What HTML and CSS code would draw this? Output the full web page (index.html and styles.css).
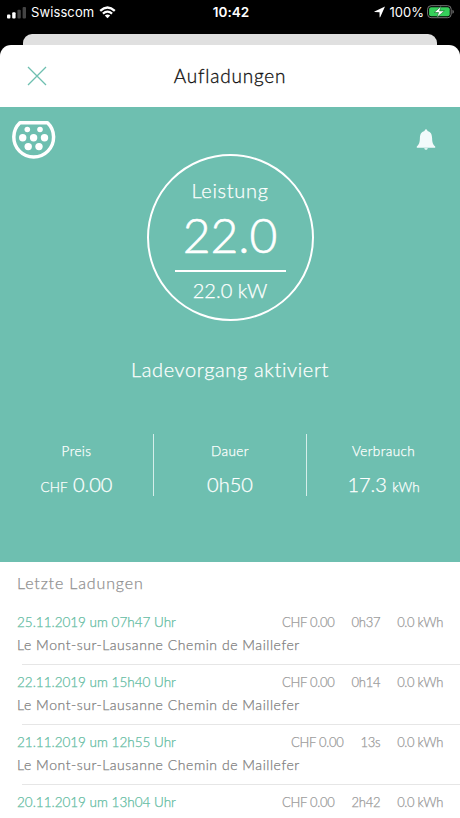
FILE: index.html
```html
<!DOCTYPE html>
<html lang="de">
<head>
    <meta charset="UTF-8">
    <meta name="viewport" content="width=device-width, initial-scale=1.0">
    <title>Aufladungen</title>
    <link rel="stylesheet" href="styles.css">
</head>
<body>
    <!-- Status Bar -->
    <div class="status-bar">
        <div class="status-left">
            <svg class="signal" width="20" height="12" viewBox="0 0 20 12">
                <rect x="0" y="7.5" width="3.4" height="4" rx="1" fill="#fff"/>
                <rect x="5.2" y="5.3" width="3.4" height="6.2" rx="1" fill="#fff"/>
                <rect x="10.4" y="2.8" width="3.4" height="8.7" rx="1" fill="#444"/>
                <rect x="15.6" y="0" width="3.4" height="11.5" rx="1" fill="#444"/>
            </svg>
            <span class="carrier">Swisscom</span>
            <svg class="wifi" width="17" height="13" viewBox="0 0 17 13">
                <path d="M1.2 4.8Q8.5-1.9 15.8 4.8" fill="none" stroke="#fff" stroke-width="2.3"/>
                <path d="M3.9 7.7Q8.5 3.7 13.1 7.7" fill="none" stroke="#fff" stroke-width="2.2"/>
                <path d="M8.5 12.3L5.8 9.6Q8.5 7.6 11.2 9.6Z" fill="#fff"/>
            </svg>
        </div>
        <span class="clock">10:42</span>
        <div class="status-right">
            <svg class="location" width="12" height="12" viewBox="0 0 12 12">
                <path d="M11 0.6L0.5 5.4Q0 6 0.7 6.1L5.5 6.2L5.6 11Q5.8 11.8 6.3 11Z" fill="#fff"/>
            </svg>
            <span class="percent">100%</span>
            <svg class="battery" width="28" height="14" viewBox="0 0 28 14">
                <rect x="0.6" y="0.7" width="23.6" height="12" rx="3.5" fill="none" stroke="#777" stroke-width="1"/>
                <rect x="2.1" y="2.2" width="20.6" height="9" rx="2" fill="#35d05a"/>
                <path d="M25.4 4.7Q27 5.2 27 6.7T25.4 8.8Z" fill="#666"/>
                <path d="M14 1.3L7.2 7.5H11.6L9.8 12.4L17.4 5.9H12.6Z" fill="#fff" stroke="#17642b" stroke-width="0.6"/>
            </svg>
        </div>
    </div>

    <div class="card-behind"></div>

    <div class="sheet">
        <!-- Title -->
        <header class="header">
            <svg class="close" width="20" height="20" viewBox="0 0 20 20">
                <path d="M1 1L19 19M19 1L1 19" stroke="#6ebfb0" stroke-width="1.3"/>
            </svg>
            <h1>Aufladungen</h1>
        </header>

        <!-- Current charging -->
        <section class="charging">
            <div class="icons">
                <svg class="plug" width="44" height="39" viewBox="0 0 44 39">
                    <path d="M7.9 1.8H35.5A19.9 19.9 0 1 1 7.9 1.8Z" fill="none" stroke="#fff" stroke-width="3.5" stroke-linejoin="round"/>
                    <g fill="#fff">
                        <circle cx="15.3" cy="8.5" r="2.8"/>
                        <circle cx="28" cy="8.5" r="2.8"/>
                        <circle cx="10.7" cy="16.7" r="3.7"/>
                        <circle cx="21.6" cy="16.7" r="3.7"/>
                        <circle cx="32.5" cy="16.7" r="3.7"/>
                        <circle cx="16.2" cy="25.6" r="3.7"/>
                        <circle cx="27" cy="25.6" r="3.7"/>
                    </g>
                </svg>
                <svg class="bell" width="20" height="22" viewBox="0 0 20 22">
                    <path d="M10 0.3Q11.4 0.4 11.5 1.9C15 2.8 16 5.5 16.1 9C16.2 13.5 16.9 15.4 19.2 17.6V18.7H0.8V17.6C3.1 15.4 3.8 13.5 3.9 9C4 5.5 5 2.8 8.5 1.9Q8.6 0.4 10 0.3Z" fill="#f2fafb"/>
                    <path d="M8.2 19.1H11.8Q11.4 21 10 21T8.2 19.1Z" fill="#d9f1ee"/>
                </svg>
            </div>

            <div class="power">
                <span class="power-label">Leistung</span>
                <span class="power-value">22.0</span>
                <span class="power-max">22.0 kW</span>
            </div>

            <p class="state">Ladevorgang aktiviert</p>

            <div class="stats">
                <div class="stat">
                    <span class="stat-label">Preis</span>
                    <span class="stat-value"><small>CHF</small> 0.00</span>
                </div>
                <div class="stat">
                    <span class="stat-label">Dauer</span>
                    <span class="stat-value">0h50</span>
                </div>
                <div class="stat">
                    <span class="stat-label">Verbrauch</span>
                    <span class="stat-value">17.3 <small>kWh</small></span>
                </div>
            </div>
        </section>

        <!-- Last charges -->
        <section class="history">
            <h2>Letzte Ladungen</h2>
            <ul>
                <li>
                    <div class="row">
                        <span class="date">25.11.2019 um 07h47 Uhr</span>
                        <span class="price">CHF 0.00</span>
                        <span class="time">0h37</span>
                        <span class="energy">0.0 kWh</span>
                    </div>
                    <p class="place">Le Mont-sur-Lausanne Chemin de Maillefer</p>
                </li>
                <li>
                    <div class="row">
                        <span class="date">22.11.2019 um 15h40 Uhr</span>
                        <span class="price">CHF 0.00</span>
                        <span class="time">0h14</span>
                        <span class="energy">0.0 kWh</span>
                    </div>
                    <p class="place">Le Mont-sur-Lausanne Chemin de Maillefer</p>
                </li>
                <li>
                    <div class="row">
                        <span class="date">21.11.2019 um 12h55 Uhr</span>
                        <span class="price">CHF 0.00</span>
                        <span class="time">13s</span>
                        <span class="energy">0.0 kWh</span>
                    </div>
                    <p class="place">Le Mont-sur-Lausanne Chemin de Maillefer</p>
                </li>
                <li>
                    <div class="row">
                        <span class="date">20.11.2019 um 13h04 Uhr</span>
                        <span class="price">CHF 0.00</span>
                        <span class="time">2h42</span>
                        <span class="energy">0.0 kWh</span>
                    </div>
                </li>
            </ul>
        </section>
    </div>
</body>
</html>
```
FILE: styles.css
```css
* {
    box-sizing: border-box;
}

body {
    font-family: Lato, 'Open Sans', sans-serif;
    margin: 0;
    height: 818px;
    overflow: hidden;
    background-color: #000;
    display: flex;
    flex-direction: column;
    font-variant-ligatures: none;
}

h1, h2, p, ul {
    margin: 0;
    padding: 0;
    font-weight: inherit;
}

svg {
    display: block;
    flex: none;
}

/* Status Bar */
.status-bar {
    display: grid;
    grid-template-columns: 1fr auto 1fr;
    align-items: center;
    height: 34px;
    padding: 0 5px 10px 7px;
    color: #fff;
    font-family: Inter, sans-serif;
    font-size: 13px;
    line-height: 24px;
}

.status-left,
.status-right {
    display: flex;
    align-items: center;
}

.status-right {
    justify-content: flex-end;
}

.signal {
    margin-right: 4px;
    margin-top: 1px;
}

.carrier {
    letter-spacing: 0.1px;
    margin-right: 5px;
}

.clock {
    font-weight: 600;
    font-size: 13.5px;
}

.location {
    margin-right: 4px;
}

.percent {
    margin-right: 3px;
}

/* Page below the sheet */
.card-behind {
    flex: none;
    height: 11px;
    margin: 0 23px;
    background-color: #e0e0e0;
    border-radius: 9px 9px 0 0;
}

/* Sheet */
.sheet {
    flex: 1;
    background-color: #fff;
    border-radius: 11px 11px 0 0;
    overflow: hidden;
    font-weight: 300;
    -webkit-text-stroke-width: 0.25px; /* Between light and regular */
}

.header {
    display: grid;
    grid-template-columns: 20px 1fr 20px;
    align-items: center;
    height: 62px;
    padding: 0 27px;
}

.header h1 {
    padding-bottom: 1px;
    text-align: center;
    font-size: 19px;
    letter-spacing: 0.8px;
    color: #111;
    -webkit-text-stroke-width: 0.3px;
}

/* Current charging */
.charging {
    height: 455px;
    background-color: #6ebfb0;
    color: #fff;
}

.icons {
    display: flex;
    justify-content: space-between;
    height: 47px;
    padding: 14px 24px 0 12px;
}

.icons svg {
    overflow: visible;
}

.bell {
    margin-top: 8px;
}

.power {
    display: flex;
    flex-direction: column;
    align-items: center;
    width: 167px;
    height: 167px;
    margin: 0 auto;
    padding-top: 21px;
    border: 2px solid #fff;
    border-radius: 50%;
}

.power-label {
    font-size: 20px;
    line-height: 26px;
    letter-spacing: 0.7px;
}

.power-value {
    width: 111px;
    height: 69px;
    border-bottom: 2px solid #fff;
    font-size: 48px;
    line-height: 64px;
    text-align: center;
    -webkit-text-stroke-width: 0.6px;
}

.power-max {
    font-size: 20px;
    line-height: 37px;
}

.state {
    margin-top: 35px;
    text-align: center;
    font-size: 20px;
    line-height: 26px;
    letter-spacing: 0.65px;
}

.stats {
    display: grid;
    grid-template-columns: 153px 153px 154px;
    height: 62px;
    margin-top: 52px;
}

.stat {
    display: flex;
    flex-direction: column;
    align-items: center;
    height: 62px;
    padding-top: 7px;
}

.stat + .stat {
    border-left: 1px solid #d5eeea;
}

.stat-label {
    font-size: 13.5px;
    line-height: 20px;
    letter-spacing: 0.4px;
}

.stat-value {
    margin-top: 11px;
    font-size: 20px;
    line-height: 24px;
}

.stat-value small {
    font-size: 13.5px;
}

/* Last charges */
.history {
    color: #909090;
}

.history h2 {
    padding: 9px 17px 0;
    font-size: 16px;
    line-height: 24px;
    letter-spacing: 0.85px;
}

.history ul {
    list-style: none;
    padding-top: 9px;
}

.history li {
    height: 60px;
    padding: 6px 17px 0;
}

.history li + li {
    background: linear-gradient(#e6e6e6, #e6e6e6) 22px 0 / 100% 1px no-repeat;
}

.row {
    display: flex;
    align-items: baseline;
    height: 24px;
    font-size: 13px;
    line-height: 24px;
    letter-spacing: -0.3px;
    color: #999;
}

.date {
    font-size: 13.5px;
    letter-spacing: 0;
    color: #60bb9f;
    margin-right: auto;
}

.time {
    margin: 0 17px;
}

.place {
    font-size: 14px;
    line-height: 22px;
    letter-spacing: 0.54px;
    color: #808080;
}
```
